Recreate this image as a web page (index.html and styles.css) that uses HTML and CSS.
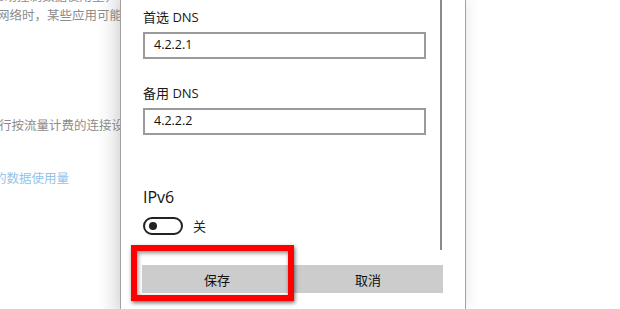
FILE: index.html
```html
<!DOCTYPE html>
<html lang="zh-CN">
<head>
    <meta charset="UTF-8">
    <meta name="viewport" content="width=device-width, initial-scale=1.0">
    <title>编辑 IP 设置</title>
    <link rel="stylesheet" href="styles.css">
</head>
<body>
    <div class="screen">
        <!-- Settings page behind the dialog -->
        <div class="backdrop">
            <div class="bg-text">
                <div class="bg-line first">帮助控制数据使用量，</div>
                <div class="bg-line second">网络时，某些应用可能会</div>
                <div class="bg-line third">行按流量计费的连接设置</div>
                <div class="bg-line link">的数据使用量</div>
            </div>
        </div>

        <!-- Edit IP settings dialog -->
        <div class="dialog">
            <div class="scroll-area">
                <div class="field-label">首选 DNS</div>
                <div class="text-box">4.2.2.1</div>

                <div class="field-label second">备用 DNS</div>
                <div class="text-box">4.2.2.2</div>

                <div class="section-title">IPv6</div>
                <div class="toggle-row">
                    <span class="toggle"><span class="knob"></span></span>
                    <span class="toggle-text">关</span>
                </div>
            </div>
            <div class="button-row">
                <button class="btn">保存</button>
                <button class="btn">取消</button>
            </div>
        </div>

        <div class="side"></div>

        <!-- red annotation round the save button -->
        <div class="highlight"></div>
    </div>
</body>
</html>
```

FILE: styles.css
```css
html, body {
    margin: 0;
    padding: 0;
    background: #fff;
}
body {
    font-family: "Open Sans", "Noto Sans CJK SC", sans-serif;
    width: 620px;
    height: 309px;
    overflow: hidden;
}
.screen {
    position: relative;
    display: flex;
    width: 620px;
    height: 309px;
    overflow: hidden;
}
.backdrop {
    width: 120px;
    flex: none;
    overflow: hidden;
    background: linear-gradient(to right, #fff 0, #fff 98px, #ececec 120px);
}
.bg-text {
    margin-top: -13px;
    font-family: "Noto Sans CJK SC", sans-serif;
    font-size: 12.5px;
    line-height: 18px;
    color: #8c8c8c;
    white-space: nowrap;
}
.bg-line.first { margin-left: -8px; }
.bg-line.second { margin-left: -3px; margin-top: 1px; }
.bg-line.third { margin-left: -1px; margin-top: 92px; }
.bg-line.link {
    margin-left: -6px;
    margin-top: 35px;
    color: #93c3ea;
}
.dialog {
    width: 344px;
    flex: none;
    border-left: 1px solid #a2a2a2;
    border-right: 1px solid #a2a2a2;
    background: #fff;
    box-shadow: 0 0 14px rgba(0,0,0,0.12);
    z-index: 1;
}
.scroll-area {
    height: 250px;
    box-sizing: border-box;
    margin-right: 23px;
    padding: 8px 0 0 22px;
    border-right: 2px solid #8a8a8a;
}
.field-label {
    font-size: 13px;
    line-height: 18px;
    color: #1a1a1a;
    margin-bottom: 6px;
}
.field-label.second {
    margin-top: 25px;
}
.text-box {
    width: 283px;
    height: 27px;
    box-sizing: border-box;
    border: 2px solid #9a9a9a;
    padding-left: 9px;
    font-size: 12.5px;
    line-height: 22px;
    color: #111;
}
.section-title {
    margin-top: 51px;
    font-size: 16px;
    line-height: 22px;
    color: #111;
}
.toggle-row {
    display: flex;
    align-items: center;
    gap: 10px;
    margin-top: 8px;
}
.toggle {
    display: flex;
    align-items: center;
    width: 40px;
    height: 18px;
    box-sizing: border-box;
    border: 2px solid #222;
    border-radius: 9px;
    padding-left: 4px;
}
.knob {
    width: 8px;
    height: 8px;
    border-radius: 50%;
    background: #222;
}
.toggle-text {
    font-family: "Noto Sans CJK SC", sans-serif;
    font-size: 13px;
    color: #222;
}
.button-row {
    display: flex;
    gap: 1px;
    padding: 15px 0 0 21px;
}
.btn {
    width: 150px;
    height: 28px;
    border: none;
    background: #cccccc;
    font-family: "Noto Sans CJK SC", sans-serif;
    font-size: 13px;
    color: #111;
    padding: 0;
}
.side {
    flex: 1;
    background: #fff;
}
.highlight {
    position: absolute;
    left: 131px;
    top: 245px;
    width: 163px;
    height: 56px;
    box-sizing: border-box;
    border: 6px solid #ff0000;
    box-shadow: 1px 2px 4px rgba(0,0,0,0.55), inset 1px 2px 4px rgba(0,0,0,0.45);
    z-index: 2;
}
```
